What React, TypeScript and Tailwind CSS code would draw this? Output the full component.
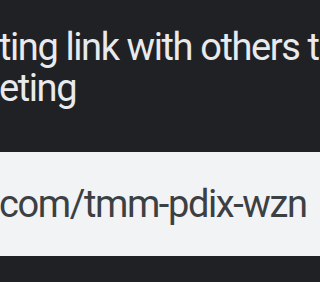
import React from "react";

export default function App() {
  return (
    <div
      className="w-[320px] h-[282px] overflow-hidden bg-[#202124] pt-[27px]"
      style={{ fontFamily: "Roboto, 'Noto Sans', sans-serif" }}
    >
      <div className="ml-[-1px] text-[38px] leading-[41px] tracking-[-1.4px] text-[#e8eaed] whitespace-nowrap">
        <div>ting link with others t</div>
        <div>eting</div>
      </div>
      <div className="mt-[43px] h-[104px] bg-[#f1f3f4] flex items-center">
        <div className="ml-[-1px] text-[38px] leading-[41px] tracking-[-1.4px] text-[#3c4043] whitespace-nowrap">
          com/tmm-pdix-wzn
        </div>
      </div>
    </div>
  );
}
